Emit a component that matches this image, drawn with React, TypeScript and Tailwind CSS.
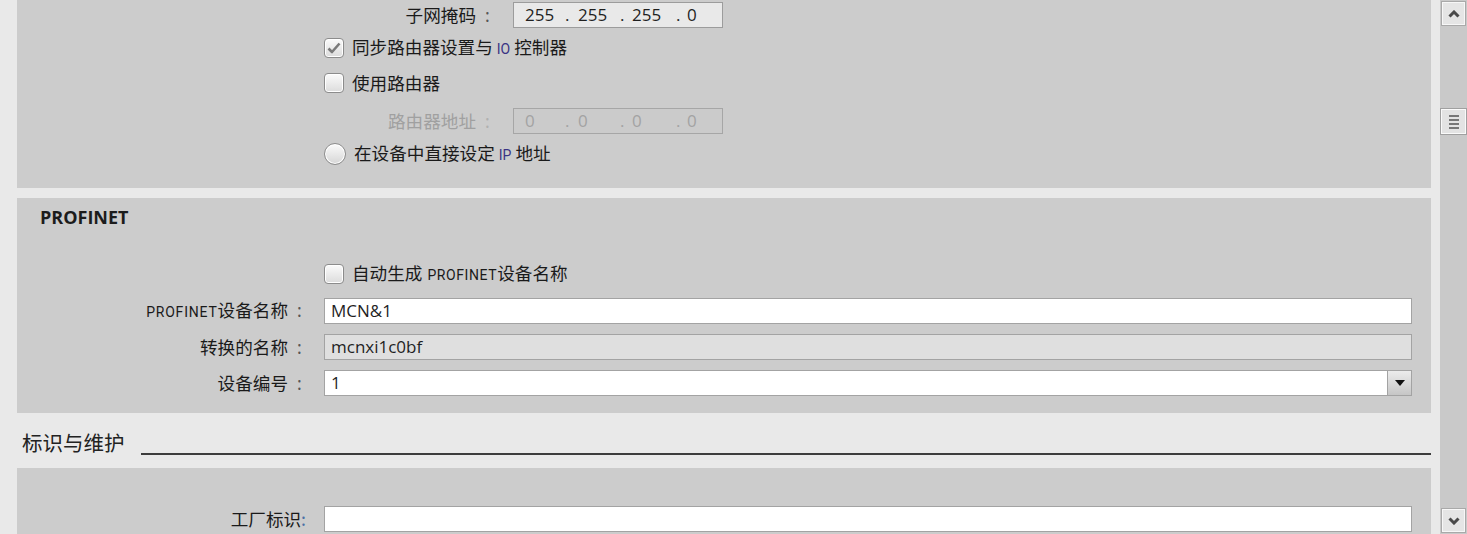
import React from 'react';

const cjk = "font-['Noto_Sans_CJK_SC',sans-serif]";
const latin = "font-['Open_Sans','Noto_Sans_CJK_SC',sans-serif]";

function Checkbox({checked = false}: {checked?: boolean}) {
  return (
    <span className="flex h-[20px] w-[20px] shrink-0 items-center justify-center rounded-[4px] border border-[#8c8c8c] bg-gradient-to-b from-[#fbfbfb] to-[#dcdcdc] shadow-[inset_0_0_0_1px_#ffffff]">
      {checked && (
        <svg width="14" height="12" viewBox="0 0 14 12">
          <path d="M1.5 6.5 L5 10 L12.5 1.5" fill="none" stroke="#7a7a7a" strokeWidth="2.6" strokeLinejoin="round" />
        </svg>
      )}
    </span>
  );
}

function Radio() {
  return (
    <span className="h-[22px] w-[22px] shrink-0 rounded-full border border-[#8c8c8c] bg-gradient-to-b from-[#fbfbfb] to-[#d6d6d6] shadow-[inset_0_0_0_1px_#ffffff]" />
  );
}

function Tag({children}: {children: React.ReactNode}) {
  return <span className="mx-[4px] font-['Roboto',sans-serif] text-[14px] text-[#3a3484]">{children}</span>;
}

function Colon({gray = false}: {gray?: boolean}) {
  return (
    <span className={`inline-block w-[18px] pl-[9px] text-left font-['Noto_Sans',sans-serif] ${gray ? 'text-[#b0b0b0]' : 'text-[#555]'}`}>
      :
    </span>
  );
}

function IpField({parts, disabled = false}: {parts: string[]; disabled?: boolean}) {
  return (
    <div
      className={`flex h-[26px] w-[210px] items-center border pl-[11px] ${latin} text-[17px] ${
        disabled ? 'border-[#a6a6a6] bg-[#cbcbcb] text-[#a3a3a3]' : 'border-[#9c9c9c] bg-[#e9e9e9] text-[#1f1f1f]'
      }`}
    >
      <span className="w-[40px]">{parts[0]}</span>
      <span className="w-[13px]">.</span>
      <span className="w-[42px]">{parts[1]}</span>
      <span className="w-[12px]">.</span>
      <span className="w-[44px]">{parts[2]}</span>
      <span className="w-[11px]">.</span>
      <span>{parts[3]}</span>
    </div>
  );
}

function Field({label, children}: {label: React.ReactNode; children: React.ReactNode}) {
  return (
    <div className="flex h-[26px] items-center">
      <div className="w-[307px] shrink-0 pr-[18px] text-right">{label}</div>
      {children}
    </div>
  );
}

function TextBox({value, tone = 'white'}: {value: string; tone?: 'white' | 'gray'}) {
  return (
    <div
      className={`flex h-[26px] flex-1 items-center border border-[#a3a3a3] pl-[6px] ${latin} text-[17px] text-[#1f1f1f] ${
        tone === 'gray' ? 'bg-[#dfdfdf]' : 'bg-white'
      }`}
    >
      {value}
    </div>
  );
}

function ScrollButton({dir}: {dir: 'up' | 'down'}) {
  return (
    <div className="flex h-[25px] w-[25px] items-center justify-center border border-[#a9a9a9] bg-[#e5e5e5] shadow-[inset_0_0_0_1px_#f7f7f7]">
      <svg width="12" height="8" viewBox="0 0 12 8">
        <path
          d={dir === 'up' ? 'M1.5 6.5 L6 2 L10.5 6.5' : 'M1.5 1.5 L6 6 L10.5 1.5'}
          fill="none"
          stroke="#4a4a4a"
          strokeWidth="3"
        />
      </svg>
    </div>
  );
}

function Scrollbar() {
  return (
    <div className="flex w-[27px] flex-col items-center bg-[#c9c9c9] pb-[1px] pt-[1px]">
      <ScrollButton dir="up" />
      <div className="mt-[82px] flex h-[27px] w-[27px] flex-col items-center justify-center gap-[2px] border border-[#a0a0a0] bg-[#e3e3e3] shadow-[inset_0_0_0_1px_#fafafa]">
        <span className="h-[2px] w-[10px] bg-[#777]" />
        <span className="h-[2px] w-[10px] bg-[#777]" />
        <span className="h-[2px] w-[10px] bg-[#777]" />
        <span className="h-[2px] w-[10px] bg-[#777]" />
      </div>
      <div className="flex-1" />
      <ScrollButton dir="down" />
    </div>
  );
}

export default function App() {
  return (
    <div className={`flex h-[534px] w-[1467px] overflow-hidden bg-[#e9e9e9] ${cjk} text-[17.6px] leading-[24px] text-[#1a1a1a]`}>
      <div className="flex flex-1 flex-col pl-[17px] pr-[9px]">
        {/* IP protocol (continued) */}
        <section className="flex h-[188px] shrink-0 flex-col bg-[#cccccc] pt-[2px]">
          <div className="flex h-[26px] items-center">
            <div className="w-[496px] shrink-0 pr-[19px] text-right">
              子网掩码<Colon />
            </div>
            <IpField parts={['255', '255', '255', '0']} />
          </div>
          <label className="mt-[9px] flex h-[22px] items-center gap-[8px] pl-[307px]">
            <Checkbox checked />
            <span>
              同步路由器设置与<Tag>IO</Tag>控制器
            </span>
          </label>
          <label className="mt-[13px] flex h-[22px] items-center gap-[8px] pl-[307px]">
            <Checkbox />
            <span>使用路由器</span>
          </label>
          <div className="mt-[14px] flex h-[26px] items-center">
            <div className="w-[496px] shrink-0 pr-[19px] text-right text-[#a0a0a0]">
              路由器地址<Colon gray />
            </div>
            <IpField parts={['0', '0', '0', '0']} disabled />
          </div>
          <label className="mt-[9px] flex h-[22px] items-center gap-[8px] pl-[307px]">
            <Radio />
            <span>
              在设备中直接设定<Tag>IP</Tag>地址
            </span>
          </label>
        </section>

        {/* PROFINET */}
        <section className="mt-[10px] flex h-[215px] shrink-0 flex-col bg-[#cccccc] pr-[19px] pt-[7px]">
          <h2 className="pl-[23px] font-['Open_Sans',sans-serif] text-[18px] font-bold leading-[24px] text-[#1c1c1c]">PROFINET</h2>
          <label className="mt-[34px] flex h-[22px] items-center gap-[8px] pl-[307px]">
            <Checkbox />
            <span>
              自动生成
              <span className="ml-[5px] font-['Roboto',sans-serif] text-[14px] tracking-[0.6px]">PROFINET</span>
              设备名称
            </span>
          </label>
          <div className="mt-[13px] flex flex-col gap-[10px]">
            <Field
              label={
                <>
                  <span className="font-['Roboto',sans-serif] text-[14px] tracking-[0.8px]">PROFINET</span>设备名称
                  <Colon />
                </>
              }
            >
              <TextBox value="MCN&1" />
            </Field>
            <Field
              label={
                <>
                  转换的名称
                  <Colon />
                </>
              }
            >
              <TextBox value="mcnxi1c0bf" tone="gray" />
            </Field>
            <Field
              label={
                <>
                  设备编号
                  <Colon />
                </>
              }
            >
              <div className="flex h-[26px] flex-1 border border-[#a3a3a3] bg-white">
                <div className={`flex flex-1 items-center pl-[6px] ${latin} text-[17px] text-[#1f1f1f]`}>1</div>
                <div className="flex w-[24px] items-center justify-center border-l border-[#a3a3a3] bg-gradient-to-b from-[#ececec] to-[#c6c6c6]">
                  <svg width="10" height="6" viewBox="0 0 10 6">
                    <path d="M0 0 H10 L5 6 Z" fill="#111" />
                  </svg>
                </div>
              </div>
            </Field>
          </div>
        </section>

        {/* Identification & maintenance */}
        <div className="flex h-[55px] shrink-0 items-end pl-[5px]">
          <span className="mb-[14px] text-[20.5px] leading-[24px] text-[#222]">标识与维护</span>
          <span className="mb-[13px] ml-[16px] h-[2px] flex-1 bg-[#3c3c3c]" />
        </div>
        <section className="flex flex-1 flex-col bg-[#cccccc] pr-[19px] pt-[38px]">
          <Field
            label={
              <>
                工厂标识<span className="text-[#4a6fa5]">:</span>
              </>
            }
          >
            <TextBox value="" />
          </Field>
        </section>
      </div>
      <Scrollbar />
    </div>
  );
}
